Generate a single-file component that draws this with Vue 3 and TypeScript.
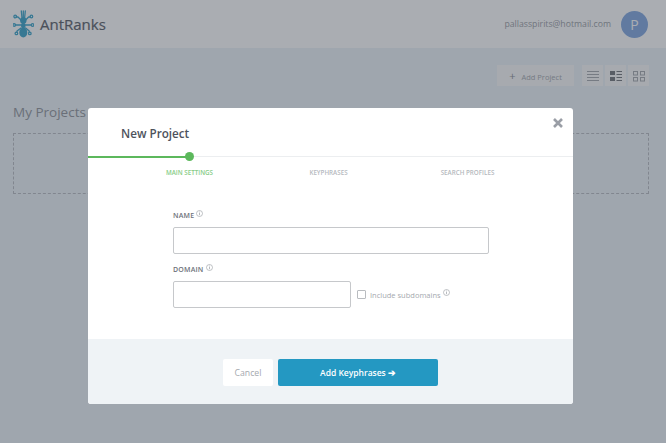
<template>
  <div class="page">
    <header class="topbar">
      <div class="brand">
        <svg class="ant" width="21" height="28" viewBox="0 0 21 28" fill="none" stroke="#2f9fc7" stroke-width="1.3" stroke-linecap="round" stroke-linejoin="round">
          <path d="M9 8 8.3 1M11.6 8 12.3 1M10.3 8V1M8 10 5 7H3.2M12.6 10l3-3h1.8M8 15H2.2M12.6 15h5.9M8 18l-4 3v1.2M12.6 18l3.6 3v1.2" />
          <circle cx="2.2" cy="6.5" r="1.3" />
          <circle cx="18.4" cy="6.5" r="1.3" />
          <circle cx="1.2" cy="15" r="1.3" />
          <circle cx="19.6" cy="15" r="1.3" />
          <circle cx="3.4" cy="23.4" r="1.3" />
          <circle cx="16.8" cy="23.4" r="1.3" />
          <ellipse cx="10.3" cy="10.5" rx="3.2" ry="3.2" fill="#2f9fc7" stroke="none" />
          <ellipse cx="10.3" cy="15.5" rx="2.3" ry="2.8" fill="#2f9fc7" stroke="none" />
          <ellipse cx="10.3" cy="22.5" rx="4" ry="5" fill="#2f9fc7" stroke="none" />
        </svg>
        <span class="brand-name">AntRanks</span>
      </div>
      <div class="account">
        <span class="email">pallasspirits@hotmail.com</span>
        <span class="avatar">P</span>
      </div>
    </header>

    <main class="content">
      <div class="toolbar">
        <button class="add-project" type="button"><span class="plus">+</span>Add Project</button>
        <div class="views">
          <button v-for="v in views" :key="v.name" class="view" type="button">
            <svg width="14" height="14" viewBox="0 0 14 14" fill="#a0a4aa" v-html="v.icon" />
          </button>
        </div>
      </div>
      <h2 class="section-title">My Projects</h2>
      <div class="dropzone"></div>
    </main>

    <div class="overlay">
      <section class="modal">
        <button class="close" type="button" aria-label="Close">
          <svg width="10" height="10" viewBox="0 0 10 10" stroke="#9a9ea6" stroke-width="2.6" fill="none"><path d="M1 1l8 8M9 1 1 9" /></svg>
        </button>
        <h1 class="modal-title">New Project</h1>

        <div class="progress">
          <div class="progress-fill"></div>
          <div class="progress-dot"></div>
        </div>
        <ol class="steps">
          <li v-for="(s, i) in steps" :key="s" class="step" :class="{ active: i === 0 }">{{ s }}</li>
        </ol>

        <form class="form" @submit.prevent>
          <label class="label">NAME <svg class="info" width="7" height="7" viewBox="0 0 7 7" v-html="infoIcon" /></label>
          <input class="input name" type="text" />
          <label class="label domain-label">DOMAIN <svg class="info" width="7" height="7" viewBox="0 0 7 7" v-html="infoIcon" /></label>
          <div class="domain-row">
            <input class="input domain" type="text" />
            <span class="check"></span>
            <span class="check-text">Include subdomains</span>
            <svg class="info sub" width="7" height="7" viewBox="0 0 7 7" v-html="infoIcon" />
          </div>
        </form>

        <footer class="modal-footer">
          <button class="cancel" type="button">Cancel</button>
          <button class="next" type="button">Add Keyphrases ➔</button>
        </footer>
      </section>
    </div>
  </div>
</template>

<script setup lang="ts">
const steps = ["MAIN SETTINGS", "KEYPHRASES", "SEARCH PROFILES"];

const infoIcon =
  '<circle cx="3.5" cy="3.5" r="3" fill="none" stroke="#a4a8ae" stroke-width=".7"/><path d="M3.5 2.8v2.4M3.5 1.6v.7" stroke="#a4a8ae" stroke-width=".8"/>';

const views = [
  {
    name: "list",
    icon: '<rect x="1" y="2" width="12" height="1"/><rect x="1" y="5" width="12" height="1"/><rect x="1" y="8" width="12" height="1"/><rect x="1" y="11" width="12" height="1"/>',
  },
  {
    name: "detail",
    icon: '<g fill="#6a6e74"><rect x="1" y="2" width="5" height="4"/><rect x="1" y="8" width="5" height="4"/><rect x="7.5" y="2" width="5.5" height="1"/><rect x="7.5" y="5" width="5.5" height="1"/><rect x="7.5" y="8" width="5.5" height="1"/><rect x="7.5" y="11" width="5.5" height="1"/></g>',
  },
  {
    name: "grid",
    icon: '<g fill="none" stroke="#a0a4aa"><rect x="1.5" y="2.5" width="4" height="3.5"/><rect x="8.5" y="2.5" width="4" height="3.5"/><rect x="1.5" y="8.5" width="4" height="3.5"/><rect x="8.5" y="8.5" width="4" height="3.5"/></g>',
  },
];
</script>

<style>
html,
body {
  margin: 0;
}
</style>

<style scoped>
.page {
  position: relative;
  width: 666px;
  height: 443px;
  overflow: hidden;
  background: #ecf2f7;
  font-family: "Open Sans", sans-serif;
  color: #4a4f58;
}
.topbar {
  height: 48px;
  background: #fff;
  display: flex;
  align-items: center;
  justify-content: space-between;
  padding: 0 18px 0 13px;
}
.brand {
  display: flex;
  align-items: center;
  gap: 6px;
}
.brand-name {
  font-size: 15px;
  font-weight: 400;
  -webkit-text-stroke: 0.2px #505560;
  color: #505560;
}
.account {
  display: flex;
  align-items: center;
  gap: 10px;
}
.email {
  font-size: 8.7px;
  color: #94989e;
}
.avatar {
  width: 27px;
  height: 27px;
  border-radius: 50%;
  background: #7aa3df;
  color: #fff;
  font-size: 14px;
  display: flex;
  align-items: center;
  justify-content: center;
}
.content {
  padding: 17px 17px 0 13px;
}
.toolbar {
  display: flex;
  justify-content: flex-end;
  gap: 8px;
}
.add-project {
  width: 77px;
  height: 21px;
  border: 0;
  padding: 0;
  background: #f9f9f9;
  font-family: inherit;
  font-size: 7.5px;
  color: #a0a4aa;
}
.plus {
  font-size: 11px;
  margin-right: 6px;
  color: #85898f;
}
.views {
  display: flex;
  gap: 2px;
}
.view {
  width: 21px;
  height: 21px;
  padding: 0;
  border: 0;
  background: #f9f9f9;
  display: flex;
  align-items: center;
  justify-content: center;
}
.section-title {
  margin: 16px 0 11px;
  font-size: 13.5px;
  font-weight: 400;
  line-height: 20px;
  color: #8a8f96;
}
.dropzone {
  height: 59px;
  border: 1.5px dashed #b5b9bf;
}
.overlay {
  position: absolute;
  inset: 0;
  background: rgba(67, 74, 84, 0.45);
}
.modal {
  position: absolute;
  left: 88px;
  top: 108px;
  width: 485px;
  height: 296px;
  background: #fff;
  border-radius: 3px;
  display: flex;
  flex-direction: column;
}
.close {
  position: absolute;
  right: 10px;
  top: 10px;
  padding: 0;
  border: 0;
  background: none;
  line-height: 0;
}
.modal-title {
  margin: 0;
  padding: 16px 0 0 33px;
  height: 32px;
  font-size: 11.7px;
  line-height: 18px;
  font-weight: 600;
  color: #4d525c;
}
.progress {
  position: relative;
  height: 1px;
  background: #eceef0;
}
.progress-fill {
  width: 102px;
  height: 2px;
  background: #5cb85c;
}
.progress-dot {
  position: absolute;
  left: 97px;
  top: -4px;
  width: 9px;
  height: 9px;
  border-radius: 50%;
  background: #5cb85c;
}
.steps {
  display: grid;
  grid-template-columns: repeat(3, 1fr);
  width: 417px;
  margin: 11px 0 0;
  padding: 0 0 0 32px;
  list-style: none;
  text-align: center;
}
.step {
  font-size: 6.25px;
  line-height: 10px;
  font-weight: 600;
  color: #b4b8bd;
}
.step.active {
  color: #86cc86;
}
.form {
  flex: 1;
  display: flex;
  flex-direction: column;
  padding: 33px 0 0 85px;
}
.label {
  display: flex;
  align-items: flex-start;
  gap: 2px;
  font-size: 7px;
  line-height: 10px;
  font-weight: 600;
  letter-spacing: 0.2px;
  color: #6d727a;
  margin-bottom: 6px;
}
.domain-label {
  margin-top: 11px;
}
.info {
  margin-top: -1px;
}
.input {
  box-sizing: border-box;
  height: 27px;
  border: 1px solid #c6c8cb;
  border-radius: 2px;
  padding: 0;
  background: #fff;
  outline: none;
}
.input.name {
  width: 316px;
}
.input.domain {
  width: 178px;
}
.domain-row {
  display: flex;
  align-items: center;
}
.check {
  box-sizing: border-box;
  width: 9px;
  height: 9px;
  margin-left: 6px;
  border: 1px solid #b9bcc0;
  border-radius: 1px;
}
.check-text {
  margin-left: 4px;
  font-size: 7.5px;
  color: #a4a8ae;
}
.info.sub {
  margin: -4px 0 0 2px;
}
.modal-footer {
  height: 65px;
  box-sizing: border-box;
  background: #eff3f6;
  border-radius: 0 0 3px 3px;
  display: flex;
  align-items: flex-start;
  gap: 5px;
  padding: 20px 0 0 135px;
}
.cancel,
.next {
  height: 27px;
  padding: 0;
  border: 0;
  border-radius: 2px;
  font-family: inherit;
}
.cancel {
  width: 50px;
  background: #fff;
  font-size: 8.7px;
  color: #a4a8ae;
}
.next {
  width: 160px;
  background: #2498c2;
  color: #fff;
  font-size: 8.5px;
  font-weight: 600;
}
</style>
